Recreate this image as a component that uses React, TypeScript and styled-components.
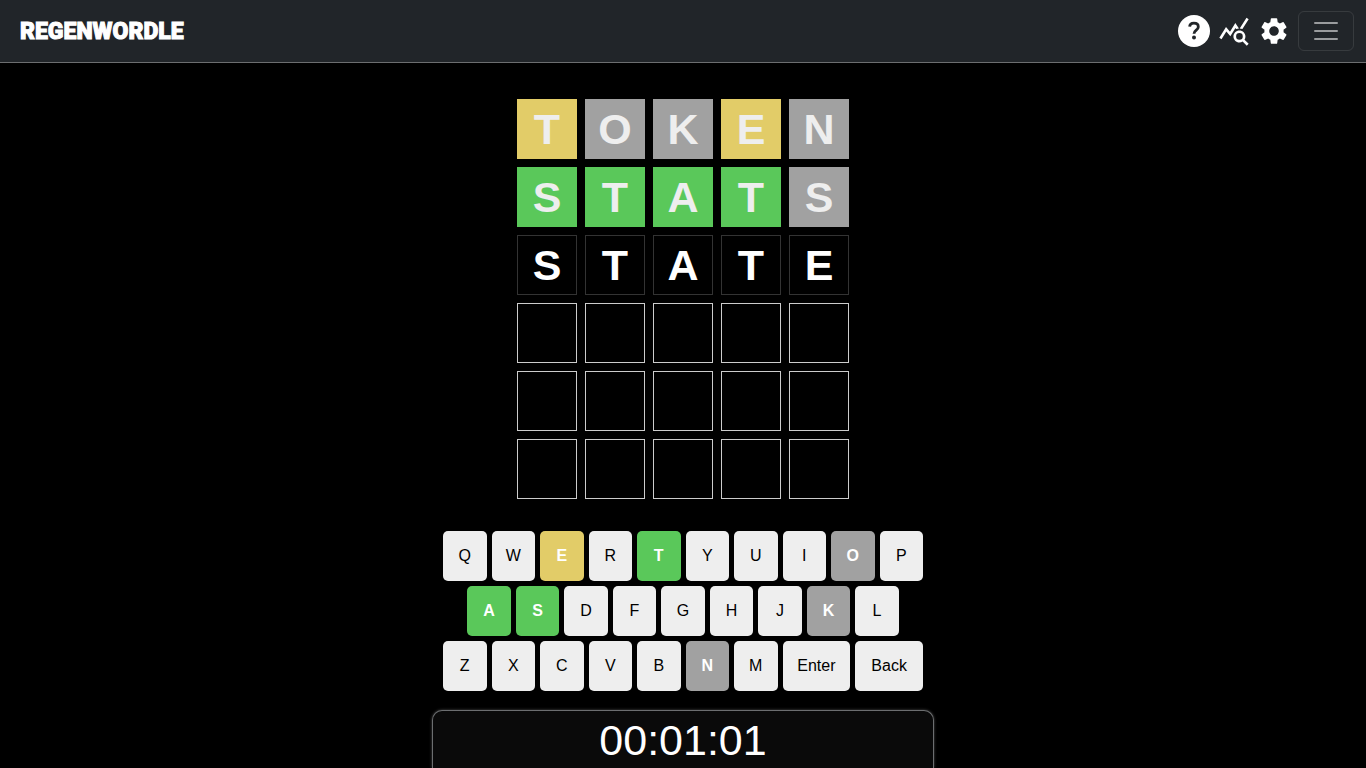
import React from "react";
import styled, { createGlobalStyle } from "styled-components";
import { MdQueryStats, MdSettings } from "react-icons/md";

type Status = "present" | "absent" | "correct" | "typed" | "empty";

const statusColor: Record<string, string> = {
  present: "#e2cc68",
  absent: "#a1a1a1",
  correct: "#5ac85a",
};

const GlobalStyle = createGlobalStyle`
  *, *::before, *::after { box-sizing: border-box; }
  body {
    margin: 0;
    background: #000;
    color: #fff;
    font-family: "Liberation Sans", Arial, sans-serif;
    font-size: 16px;
  }
`;

const Page = styled.div`
  display: flex;
  flex-direction: column;
  align-items: center;
  min-height: 100vh;
`;

const Navbar = styled.header`
  display: flex;
  align-items: center;
  justify-content: space-between;
  align-self: stretch;
  padding: 11px 12px 11px 20px;
  background: #212529;
  border-bottom: 1px solid #6c6e70;
`;

const Brand = styled.a`
  padding-top: 2px;
  color: #fff;
  font-family: Roboto, sans-serif;
  font-size: 23px;
  font-weight: 900;
  line-height: 38px;
  text-decoration: none;
  -webkit-text-stroke: 1px #fff;
`;

const Actions = styled.nav`
  display: flex;
  align-items: center;
  gap: 8px;
`;

const IconButton = styled.button`
  display: flex;
  padding: 0;
  border: 0;
  background: none;
  color: #fff;
  font-size: 32px;
  cursor: pointer;
`;

const Toggler = styled.button`
  display: flex;
  padding: 4px 12px;
  border: 1px solid rgba(255, 255, 255, 0.1);
  border-radius: 6px;
  background: none;
  color: rgba(255, 255, 255, 0.55);
  cursor: pointer;
`;

const Board = styled.main`
  display: grid;
  grid-template-columns: repeat(5, 60px);
  grid-auto-rows: 60px;
  gap: 8px;
  margin-top: 36px;
`;

const Tile = styled.div<{ $status: Status }>`
  display: flex;
  align-items: center;
  justify-content: center;
  border: 1px solid
    ${({ $status }) =>
      statusColor[$status] ?? ($status === "typed" ? "#333" : "#ccc")};
  background: ${({ $status }) => statusColor[$status] ?? "#000"};
  color: ${({ $status }) => ($status === "typed" ? "#fff" : "#eee")};
  font-size: 43px;
  font-weight: 700;
  line-height: 58px;
`;

const Keyboard = styled.section`
  display: flex;
  flex-direction: column;
  gap: 5px;
  width: 100%;
  max-width: 480px;
  margin: 32px 0 19px;
`;

const KeyRow = styled.div`
  display: grid;
  grid-template-columns: repeat(20, 1fr);
  gap: 5px;
`;

const Key = styled.button<{ $status?: Status; $wide: boolean; $indent: boolean }>`
  grid-column: ${({ $indent }) => ($indent ? "2 /" : "")} span
    ${({ $wide }) => ($wide ? 3 : 2)};
  height: 50px;
  padding: 0;
  border: 0;
  border-radius: 5px;
  background: ${({ $status }) => ($status ? statusColor[$status] : "#eee")};
  color: ${({ $status }) => ($status ? "#fff" : "#000")};
  font-family: inherit;
  font-size: 16px;
  font-weight: ${({ $status }) => ($status ? 700 : 400)};
  cursor: pointer;
`;

const TimerPanel = styled.section`
  flex: 1;
  width: 100%;
  max-width: 502px;
  padding-top: 1px;
  border: 1px solid #6c6e70;
  border-bottom: 0;
  border-radius: 10px 10px 0 0;
  background: #0a0a0a;
  box-shadow: 0 0 3px rgba(255, 255, 255, 0.3);
  font-size: 43px;
  line-height: 56px;
  text-align: center;
`;

const HelpIcon = () => (
  <svg width="32" height="32" viewBox="0 0 32 32" fill="none">
    <circle cx="16" cy="16" r="16" fill="#fff" />
    <path
      d="M11.6 11.6C11.8 9.4 13.5 8.2 15.9 8.2C18.5 8.2 20.3 9.6 20.3 11.9C20.3 15 16 15.2 16 18.7"
      stroke="#212529"
      strokeWidth="2.8"
    />
    <circle cx="16" cy="22.4" r="2" fill="#212529" />
  </svg>
);

const guesses: { word: string; marks: Status[] }[] = [
  { word: "TOKEN", marks: ["present", "absent", "absent", "present", "absent"] },
  { word: "STATS", marks: ["correct", "correct", "correct", "correct", "absent"] },
  { word: "STATE", marks: Array(5).fill("typed") },
  { word: "     ", marks: Array(5).fill("empty") },
  { word: "     ", marks: Array(5).fill("empty") },
  { word: "     ", marks: Array(5).fill("empty") },
];

const keyRows = [
  [..."QWERTYUIOP"],
  [..."ASDFGHJKL"],
  [..."ZXCVBNM", "Enter", "Back"],
];

const keyStatus: Record<string, Status> = {
  E: "present",
  T: "correct",
  A: "correct",
  S: "correct",
  O: "absent",
  K: "absent",
  N: "absent",
};

export default function App() {
  return (
    <>
      <GlobalStyle />
      <Page>
        <Navbar>
          <Brand href="#">REGENWORDLE</Brand>
          <Actions>
            <IconButton aria-label="Help">
              <HelpIcon />
            </IconButton>
            <IconButton aria-label="Statistics">
              <MdQueryStats />
            </IconButton>
            <IconButton aria-label="Settings">
              <MdSettings />
            </IconButton>
            <Toggler aria-label="Toggle navigation">
              <svg width="30" height="30" viewBox="0 0 30 30">
                <path
                  stroke="currentColor"
                  strokeLinecap="round"
                  strokeMiterlimit="10"
                  strokeWidth="2"
                  d="M4 7h22M4 15h22M4 23h22"
                />
              </svg>
            </Toggler>
          </Actions>
        </Navbar>
        <Board>
          {guesses.map(({ word, marks }, row) =>
            marks.map((mark, col) => (
              <Tile key={`${row}-${col}`} $status={mark}>
                {word[col].trim()}
              </Tile>
            ))
          )}
        </Board>
        <Keyboard aria-label="Keyboard">
          {keyRows.map((keys, row) => (
            <KeyRow key={row}>
              {keys.map((label, i) => (
                <Key
                  key={label}
                  $status={keyStatus[label]}
                  $wide={label.length > 1}
                  $indent={row === 1 && i === 0}
                >
                  {label}
                </Key>
              ))}
            </KeyRow>
          ))}
        </Keyboard>
        <TimerPanel role="timer">00:01:01</TimerPanel>
      </Page>
    </>
  );
}
